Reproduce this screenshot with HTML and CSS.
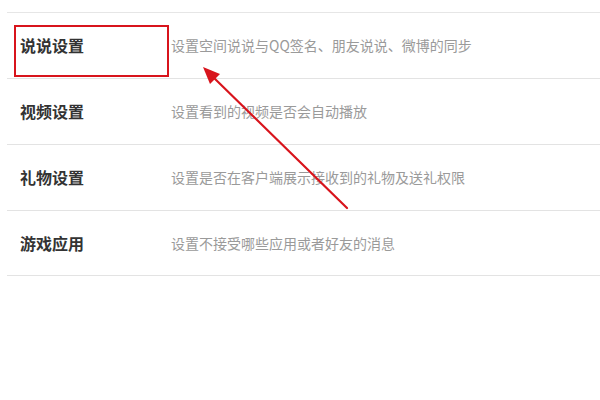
FILE: index.html
```html
<!DOCTYPE html>
<html lang="zh">
<head>
<meta charset="utf-8">
<link rel="stylesheet" href="styles.css">
</head>
<body>
<div class="page">
  <ul class="list">
    <li class="row"><span class="title">说说设置</span><span class="desc">设置空间说说与QQ签名、朋友说说、微博的同步</span></li>
    <li class="row"><span class="title">视频设置</span><span class="desc">设置看到的视频是否会自动播放</span></li>
    <li class="row"><span class="title">礼物设置</span><span class="desc">设置是否在客户端展示接收到的礼物及送礼权限</span></li>
    <li class="row"><span class="title">游戏应用</span><span class="desc">设置不接受哪些应用或者好友的消息</span></li>
  </ul>
  <div class="highlight"></div>
  <svg class="arrow" width="600" height="400" viewBox="0 0 600 400">
    <line x1="347" y1="208" x2="212" y2="76" stroke="#d8141c" stroke-width="2.2" stroke-linecap="round"/>
    <polygon points="203,67 220,74 210,84" fill="#d8141c"/>
  </svg>
</div>
</body>
</html>
```
FILE: styles.css
```css
html, body {
  margin: 0;
  padding: 0;
  background: #ffffff;
}
.page {
  position: relative;
  width: 600px;
  height: 400px;
  overflow: hidden;
  padding-top: 12px;
  box-sizing: border-box;
  font-family: "Noto Sans CJK SC", "Noto Sans", sans-serif;
}
.list {
  list-style: none;
  margin: 0 0 0 7px;
  padding: 0;
  border-top: 1px solid #e6e6e6;
}
.row {
  display: flex;
  align-items: center;
  height: 64px;
  padding-bottom: 1px;
  border-bottom: 1px solid #e3e3e3;
  padding-left: 13px;
}
.row:last-child {
  height: 63px;
}
.title {
  width: 151px;
  flex: none;
  font-size: 16px;
  font-weight: 700;
  color: #333333;
}
.desc {
  font-size: 14px;
  color: #9a9a9a;
}
.highlight {
  position: absolute;
  left: 14px;
  top: 25px;
  width: 151px;
  height: 48px;
  border: 2px solid #d8141c;
}
.arrow {
  position: absolute;
  left: 0;
  top: 0;
}
```
